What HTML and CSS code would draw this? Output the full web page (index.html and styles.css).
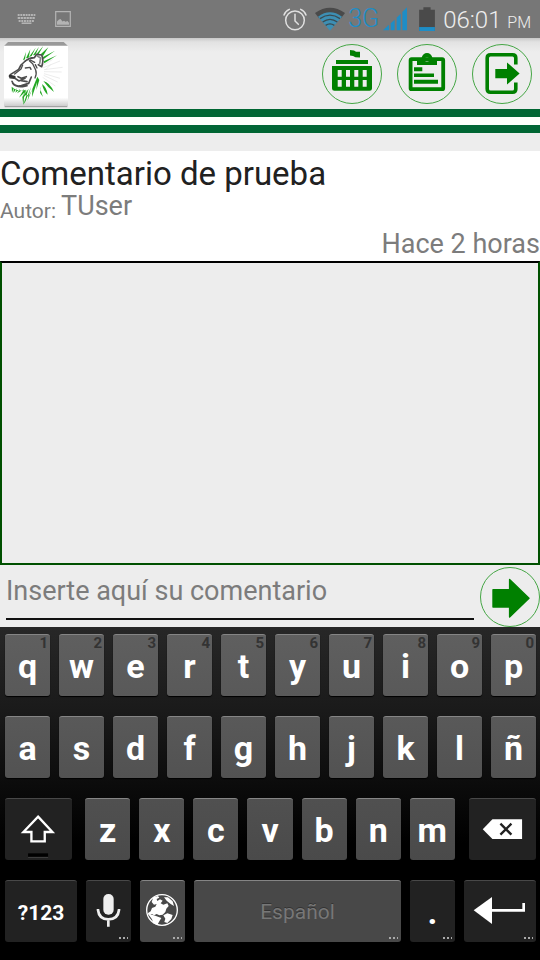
FILE: index.html
```html
<!DOCTYPE html>
<html lang="es">
<head>
<meta charset="utf-8">
<meta name="viewport" content="width=device-width, initial-scale=1">
<title>Comentario de prueba</title>
<link rel="stylesheet" href="styles.css">
</head>
<body>
<div class="screen">
  <div class="status">
    <svg class="status-note" viewBox="0 0 56 38" aria-hidden="true">
      <g fill="none" stroke="#b4b4b4" stroke-width="2">
        <path d="M18 15H36" stroke-dasharray="2 .7"/><path d="M18 18H36" stroke-dasharray="2.4 .6"/><path d="M19 21H35" stroke-dasharray="2 .7"/><path d="M22 23.300H32" stroke-width="1.600"/>
      </g>
    </svg>
    <svg class="status-pic" viewBox="0 0 16 16" aria-hidden="true">
      <path d="M.7.7H15.300V15.300H.7Z" fill="none" stroke="#b4b4b4" stroke-width="1.200"/>
      <path d="M2 13.800V10.500L4 8.500L5.500 8L7.500 10.500L9 9.800L10.500 10.800L12.500 10L14 11.800V13.800Z" fill="#b4b4b4"/>
    </svg>
    <span class="status-gap"></span>
    <svg class="status-alarm" viewBox="38 22 72 72" aria-hidden="true">
      <g fill="none" stroke="#e0e0e0" stroke-width="4.500" stroke-linecap="round"><circle cx="74" cy="62" r="28"/><path d="M74 44V64L84 74M41 46Q45 34 57 29M91 29Q103 34 107 46"/></g>
    </svg>
    <svg class="status-wifi" viewBox="135 16 90 72" aria-hidden="true">
      <path d="M135 34Q180 2 225 34L213 50Q180 26 147 50Z" fill="#4a4a4a"/>
      <path d="M144 45Q180 19 216 45L180 87Z" fill="#3d8fb4"/>
      <g fill="none" stroke="#3b4a50" stroke-width="4"><path d="M150 51Q180 30 210 51M158 61Q180 45 202 61M167 71Q180 62 193 71"/></g>
    </svg>
    <span class="status-net">3G</span>
    <svg class="status-signal" viewBox="334 18 72 70" aria-hidden="true">
      <path d="M334 87L352 70V87ZM357 87V66L369 55V87ZM375 87V49L387 37V87ZM392 87V32L406 18V87Z" fill="#1e8dc6"/>
    </svg>
    <svg class="status-battery" viewBox="444 17 48 73" aria-hidden="true">
      <path d="M444 25H457V18H479V25H492V90H444Z" fill="#4a4a4a"/><path d="M444 78H492V90H444Z" fill="#1e8dc6"/>
    </svg>
    <span class="status-time">06:01 <small>PM</small></span>
  </div>

  <header class="header">
    <svg class="logo" viewBox="12 126 192 198" role="img" aria-label="León">
      <defs>
        <linearGradient id="paper" x1="0" y1="0" x2="0" y2="1"><stop offset="0" stop-color="#fff"/><stop offset=".85" stop-color="#fff"/><stop offset="1" stop-color="#c9c9c9"/></linearGradient>
      </defs>
      <path d="M24 126H191L204 138H12Z" fill="#999"/>
      <path d="M12 137H204V316Q204 320 199 320H17Q12 320 12 316Z" fill="url(#paper)"/>
      <path d="M14 320H202" stroke="#9a9a9a" stroke-width="3"/>
      <g fill="#22a722">
        <path d="M69 181L78 156L75 178ZM78 175L91 148L86 173ZM87 171L107 143L95 168ZM99 166L117 140L106 165ZM110 161L130 138L116 162ZM122 163L145 142L129 168ZM129 171L165 152L130 178ZM131 184L171 166L133 190Z"/>
        <path d="M35 260L36 278L42 262L40 279L51 264L46 278L61 266L51 280L72 268L57 293L81 270L67 291L86 266L70 314L77 303L93 260L82 303L105 252L85 296L112 230L118 240L109 270L111 247L96 291L97 267L85 291Q82 277 72 291L70 315L67 291L78 269Q54 277 35 260Z"/>
        <path d="M130 243Q149 247 162 276Q143 262 130 243ZM126 252Q141 263 143 284Q130 273 126 252ZM124 257L121 268L129 291L120 278Z"/>
      </g>
      <g fill="none" stroke="#4d4d4d" stroke-linecap="round" stroke-linejoin="round">
        <path d="M76 183Q86 174 103 173L110 163L125 165Q132 181 125 200L115 194" stroke-width="5"/>
        <path d="M112 168L122 174L119 190" stroke-width="5" stroke="#888"/>
        <path d="M76 183L63 195L56 208L31 224L30 233L46 235" stroke-width="5"/>
        <path d="M30 228L43 231" stroke-width="8" stroke="#333"/>
        <path d="M44 222L63 207L68 195M76 204L90 202L93 208M88 182L98 191L107 210Q111 221 105 234M91 180L104 187M106 194L111 204" stroke-width="4"/>
        <path d="M48 237L57 243L75 235M54 230L64 235L79 230M64 242L81 245M36 244Q42 262 64 257L86 250L94 231M38 250Q47 262 68 260L81 257" stroke-width="5"/>
      </g>
      <g fill="none" stroke="#e2e2e2" stroke-width="2"><path d="M130 196L158 178M130 203L180 183M132 209L188 202M132 215L185 216M132 221L180 235M131 226L173 246M136 210L153 193M128 232L166 258"/></g>
    </svg>
    <nav class="actions">
      <a class="round" href="#" aria-label="Institución">
        <svg viewBox="0 0 60 60"><path fill="#008000" fill-rule="evenodd" d="M28 6L32 6.500L34 7.700H38V13.500L33.500 13.300L31 12L28 11.500ZM14 16H46V20H14ZM10 22H50V44.500Q50 46.700 47.500 46.700H12.500Q10 46.700 10 44.500ZM15.700 26V32.700H19.700V26ZM24 26V32.700H28V26ZM32.300 26V32.700H36.300V26ZM40.700 26V32.700H44.700V26ZM15.700 36V42.700H19.700V36ZM24 36V42.700H28V36ZM32.300 36V42.700H36.300V36ZM40.700 36V42.700H44.700V36Z"/></svg>
      </a>
      <a class="round" href="#" aria-label="Tareas">
        <svg viewBox="0 0 60 60"><rect x="13.600" y="15.200" width="32.600" height="30" rx="1" fill="none" stroke="#008000" stroke-width="3.800"/><path fill="#008000" fill-rule="evenodd" d="M20 14H24.500Q26 9 30 9Q34 9 35.500 14H40V21H20ZM30 13.200A2.200 2.200 0 1 0 30 17.600A2.200 2.200 0 1 0 30 13.200ZM17 23.300H25.300V27.300H17ZM17 29.500H37V33H17ZM17 35.700H41V39.700H17Z"/></svg>
      </a>
      <a class="round" href="#" aria-label="Salir">
        <svg viewBox="0 0 60 60"><path d="M43.800 20.500V14Q43.800 10.700 40.500 10.700H18.500Q15.200 10.700 15.200 14V45Q15.200 48.300 18.500 48.300H40.500Q43.800 48.300 43.800 45V38.500" fill="none" stroke="#008000" stroke-width="3.600"/><path fill="#008000" d="M23.300 25H35V18.500L47.600 29.500L35 40.500V34.300H23.300Z"/></svg>
      </a>
    </nav>
  </header>
  <div class="stripes"></div>

  <main class="main">
    <section class="post">
      <h1 class="title">Comentario de prueba</h1>
      <p class="author"><span class="author-label">Autor:</span> <span class="author-name">TUser</span></p>
      <p class="when">Hace 2 horas</p>
    </section>
    <section class="comments" aria-label="Comentarios"></section>
    <form class="compose">
      <input class="field" type="text" aria-label="Comentario" placeholder="Inserte aquí su comentario">
      <button class="round" type="button" aria-label="Enviar">
        <svg viewBox="0 0 60 60"><path d="M13 22.700H29.600V12.500L49 31.300L29.600 50V40H13Z" fill="#008000" stroke="#008000" stroke-width="1.400" stroke-linejoin="round"/></svg>
      </button>
    </form>
  </main>

  <div class="keyboard">
    <div class="row">
      <button class="key">q<sup>1</sup></button><button class="key">w<sup>2</sup></button><button class="key">e<sup>3</sup></button><button class="key">r<sup>4</sup></button><button class="key">t<sup>5</sup></button><button class="key">y<sup>6</sup></button><button class="key">u<sup>7</sup></button><button class="key">i<sup>8</sup></button><button class="key">o<sup>9</sup></button><button class="key">p<sup>0</sup></button>
    </div>
    <div class="row row-2">
      <button class="key">a</button><button class="key">s</button><button class="key">d</button><button class="key">f</button><button class="key">g</button><button class="key">h</button><button class="key">j</button><button class="key">k</button><button class="key">l</button><button class="key">ñ</button>
    </div>
    <div class="row row-3">
      <button class="key dark shift" aria-label="Mayúsculas"><svg viewBox="15 24 201 186"><path d="M114 80L157 126H134V154H94V126H70Z" fill="none" stroke="#fff" stroke-width="7"/><path d="M84 190H144V201H84Z" fill="#000"/><path d="M84 202H144" stroke="#555" stroke-width="2"/></svg></button>
      <button class="key">z</button><button class="key">x</button><button class="key">c</button><button class="key">v</button><button class="key">b</button><button class="key">n</button><button class="key">m</button>
      <button class="key dark delete" aria-label="Borrar"><svg viewBox="597 24 201 186"><path d="M638 118L667 88H756V147H667Z" fill="#fff"/><path d="M691 101L724 134M724 101L691 134" stroke="#222" stroke-width="7"/></svg></button>
    </div>
    <div class="row row-4">
      <button class="key dark symbols">?123</button>
      <button class="key dark more" aria-label="Voz"><svg viewBox="255 270 135 186"><rect x="307" y="312" width="31" height="62" rx="15" fill="#eee"/><path d="M291 357V360Q294 388 322 388Q351 388 354 360V357M322 388V410" fill="none" stroke="#eee" stroke-width="8"/></svg></button>
      <button class="key more" aria-label="Idioma"><svg viewBox="420 270 135 186"><circle cx="486" cy="360" r="46" fill="#484848" stroke="#fff" stroke-width="4"/><path d="M455 336L460 322L474 318L478 323L470 327L472 333L480 328L488 332L482 340L490 344L502 340L506 348L499 356L496 366L488 374L478 376L470 372L462 376L456 372L448 376L443 370L452 364L456 354L466 350L470 342L462 344ZM444 372L456 374L468 378L484 384L478 394L472 405L460 400L456 388ZM490 376L502 370L518 375L514 387L502 399L493 396L496 386ZM492 322L504 322L518 334L522 348L512 342L500 332Z" fill="#fff"/></svg></button>
      <button class="key space more">Español</button>
      <button class="key dark more">.</button>
      <button class="key dark enter more" aria-label="Intro"><svg viewBox="582 270 216 186"><path d="M611 361L666 321V402Z" fill="#fff"/><path d="M664 361H761V339" fill="none" stroke="#fff" stroke-width="8"/></svg></button>
    </div>
  </div>
</div>
</body>
</html>
```
FILE: styles.css
```css
* {
  box-sizing: border-box;
}

body {
  margin: 0;
  background: #ededed;
  font-family: Roboto, "Liberation Sans", sans-serif;
  color: #7c7c7c;
}

h1,
p {
  margin: 0;
  font-weight: 400;
}

button {
  font-family: inherit;
}

svg {
  display: block;
}

.screen {
  display: flex;
  flex-direction: column;
  min-height: 100vh;
}

/* Status bar */
.status {
  display: flex;
  align-items: center;
  height: 38px;
  padding-right: 9px;
  background: #777;
}

.status-note {
  width: 55px;
  height: 38px;
}

.status-pic {
  width: 16px;
  height: 16px;
}

.status-gap {
  flex: 1;
}

.status-alarm {
  width: 24px;
  height: 24px;
}

.status-wifi {
  width: 30px;
  height: 24px;
  margin: 0 3px 0 8px;
}

.status-net {
  font-size: 25px;
  font-weight: 300;
  line-height: 36px;
  color: #1e8dc6;
}

.status-signal {
  width: 24px;
  height: 24px;
  margin: 0 12px 0 4px;
}

.status-battery {
  width: 16px;
  height: 24px;
  margin-right: 8px;
}

.status-time {
  padding-top: 4px;
  font-size: 24px;
  line-height: 34px;
  font-weight: 300;
  color: #eee;
}

.status-time small {
  font-size: 16px;
}

/* Header */
.header {
  display: flex;
  align-items: flex-start;
  justify-content: space-between;
  height: 71px;
  padding: 4px 8px 0 4px;
  background: linear-gradient(#c8c8c8, #e2e2e2 4px, #ededed 14px);
}

.logo {
  width: 64px;
  height: 66px;
}

.actions {
  display: flex;
  gap: 15px;
  padding-top: 2px;
}

.round {
  flex: none;
  width: 60px;
  height: 60px;
  padding: 0;
  border: 1px solid #45a645;
  border-radius: 50%;
  background: none;
}

.round svg {
  width: 60px;
  height: 60px;
  margin: -1px;
}

.stripes {
  height: 24px;
  border: solid #006633;
  border-width: 8px 0;
  background: #fcfffa;
}

/* Post */
.main {
  display: flex;
  flex: 1;
  flex-direction: column;
  padding-top: 18px;
}

.post {
  height: 110px;
  background: #fff;
}

.title {
  font-size: 33px;
  line-height: 46px;
  color: #212121;
}

.author {
  display: flex;
  align-items: flex-end;
  gap: 5px;
  height: 30px;
  padding-bottom: 4px;
}

.author-label {
  font-size: 21px;
  line-height: 24px;
}

.author-name,
.when {
  font-size: 27px;
  line-height: 34px;
}

.when {
  text-align: right;
}

.comments {
  flex: 1;
  border: 2px solid #005000;
  border-top-color: #000;
}

.compose {
  display: flex;
  align-items: flex-start;
  gap: 6px;
  padding: 2px 0 0 6px;
}

.field {
  flex: 1;
  min-width: 0;
  height: 53px;
  padding: 0 0 3px;
  border: 0;
  border-bottom: 2px solid #111;
  background: none;
  font-family: inherit;
  font-size: 27px;
  color: #212121;
}

.field::placeholder {
  color: #7c7c7c;
  opacity: 1;
}

/* Keyboard */
.keyboard {
  display: grid;
  gap: 20px;
  padding: 7px 4px 18px 5px;
  background: linear-gradient(#272727, #1a1a1a 25%, #000 65%);
}

.row {
  display: flex;
  gap: 9px;
}

.key {
  position: relative;
  flex: 45 1 0;
  min-width: 0;
  height: 62px;
  padding: 0;
  border: 0;
  border-top: 1px solid #858585;
  border-radius: 3px;
  background: linear-gradient(#5f5f5f, #595959);
  box-shadow: 0 1px 1px #000;
  font-size: 34px;
  font-weight: 700;
  line-height: 40px;
  text-align: center;
  color: #fff;
}

.row-2 .key {
  background: linear-gradient(#595959, #525252);
}

.row-3 .key {
  background: linear-gradient(#505050, #4a4a4a);
}

.row-4 .key {
  background: #484848;
}

.row .dark {
  border-top-color: #484848;
  background: #222;
}

.key sup {
  position: absolute;
  top: 0;
  right: 2px;
  font-size: 15px;
  line-height: 16px;
  color: #333;
}

.key svg {
  position: absolute;
  inset: -1px 0 0;
  width: 100%;
  height: 62px;
}

.row .shift {
  flex-grow: 67;
  margin-right: 4px;
}

.row .delete {
  flex-grow: 67;
  margin-left: 5px;
}

.row .symbols,
.row .enter {
  flex-grow: 72;
}

.row .symbols {
  padding-top: 2px;
  font-size: 21px;
}

.row .space {
  flex-grow: 207;
  font-size: 21px;
  font-weight: 400;
  color: #777;
  text-shadow: 0 -1px #333;
}

.more::after {
  content: "";
  position: absolute;
  right: 3px;
  bottom: 3px;
  width: 9px;
  height: 2px;
  background: repeating-linear-gradient(90deg, #aaa 0 2px, transparent 2px 4px);
}
```
